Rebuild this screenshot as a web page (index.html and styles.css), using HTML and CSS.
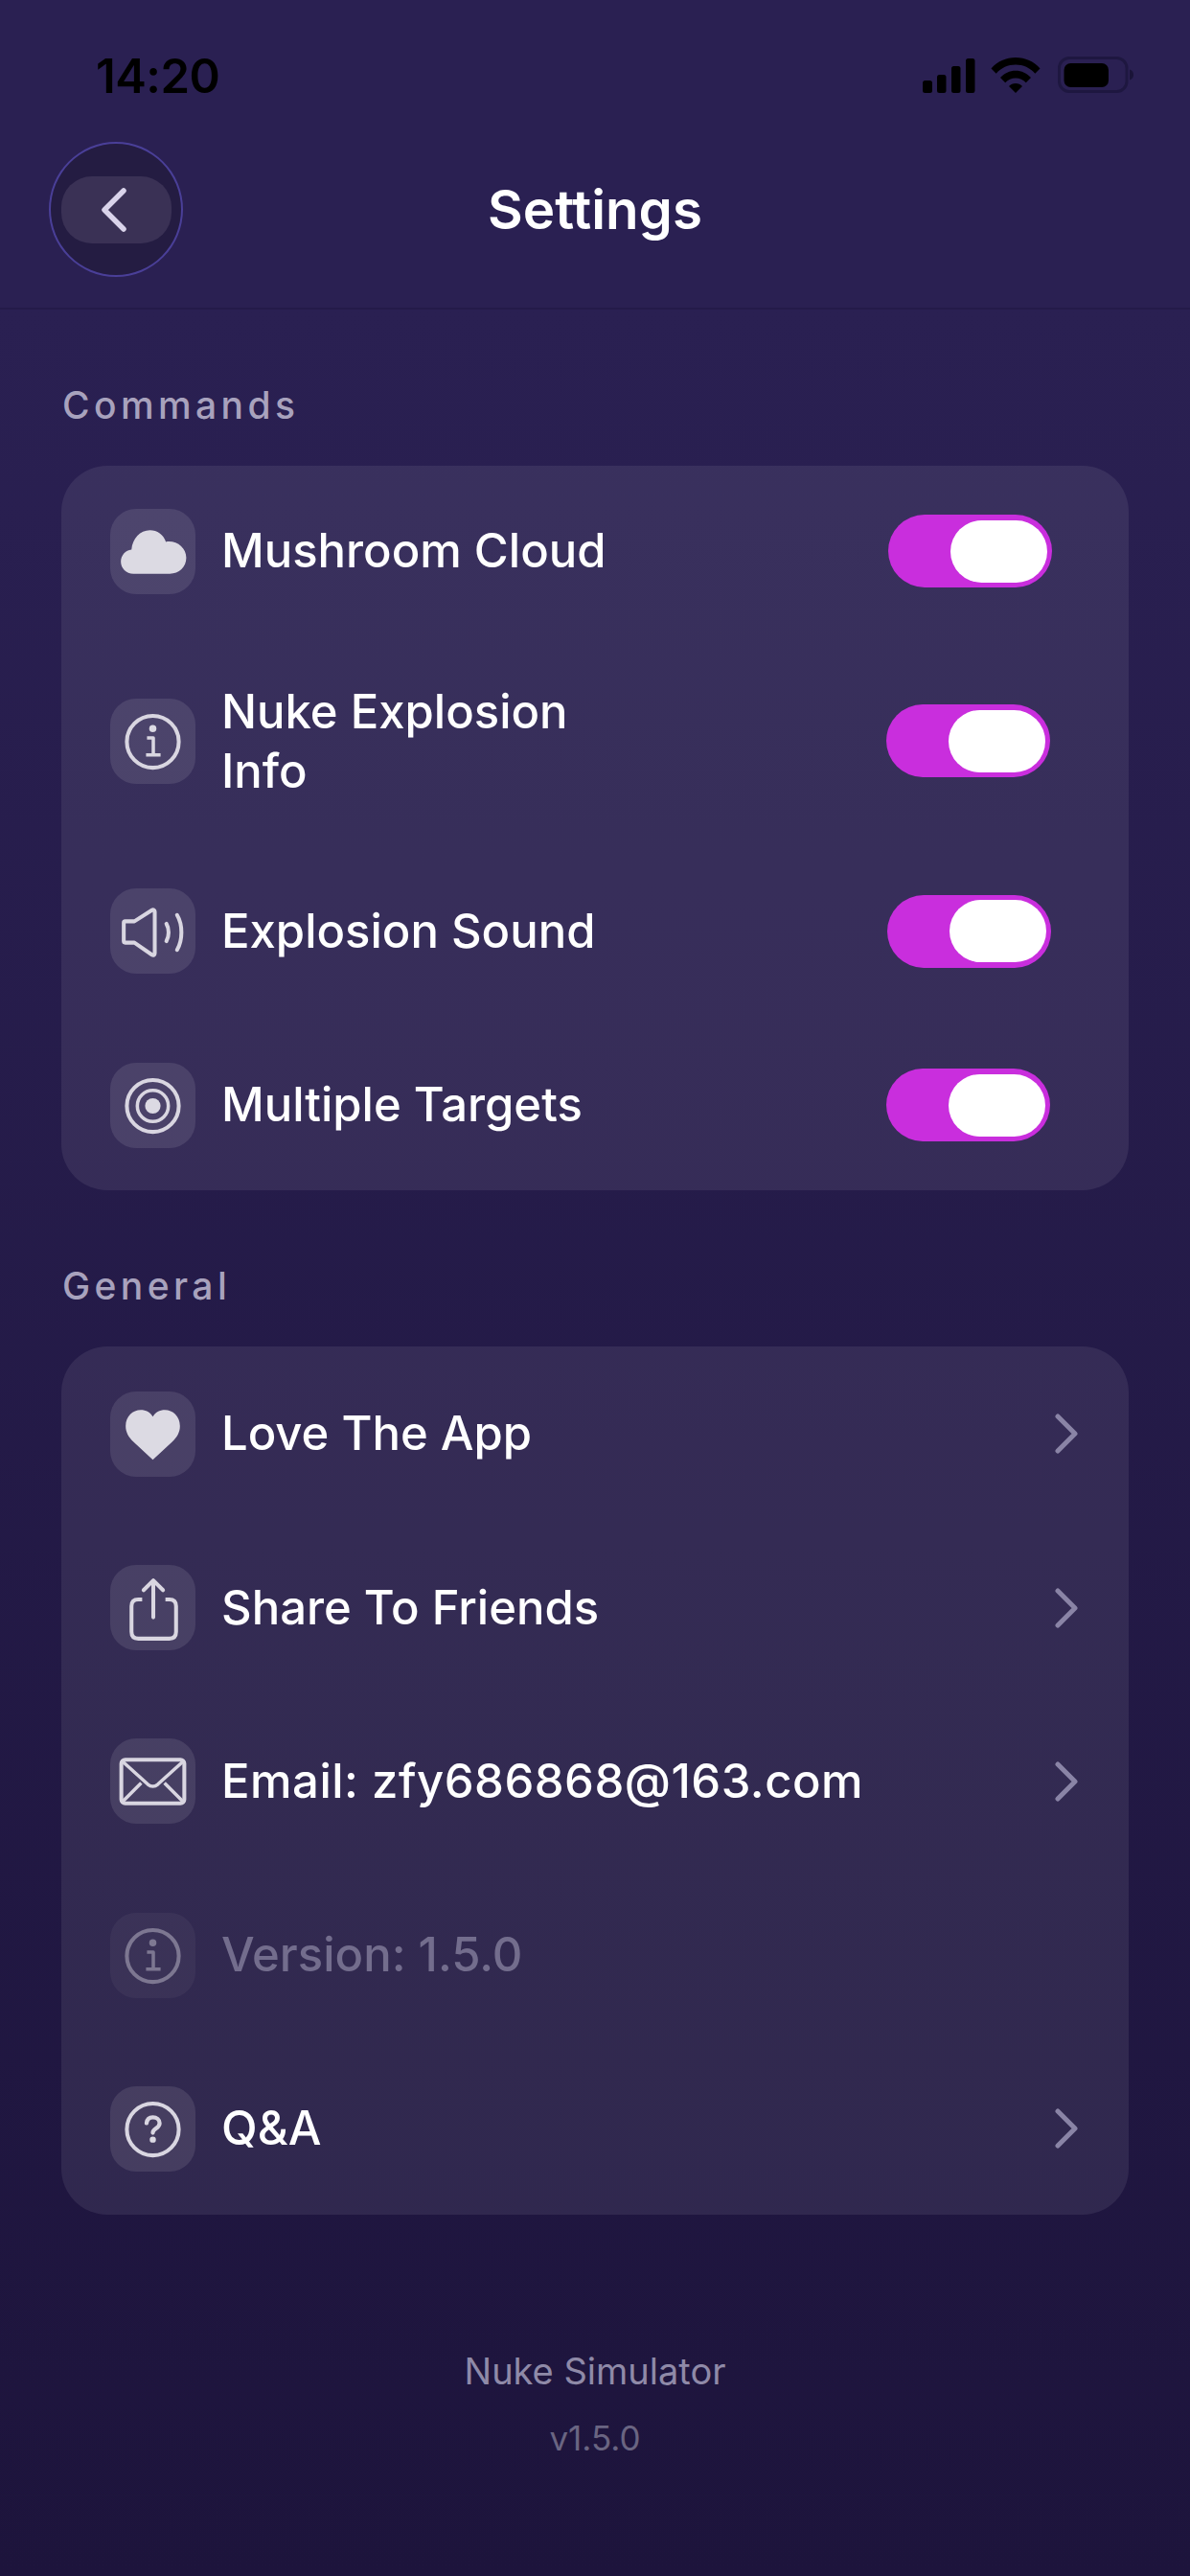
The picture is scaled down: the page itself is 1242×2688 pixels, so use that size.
FILE: index.html
```html
<!DOCTYPE html>
<html lang="en">
<head>
<meta charset="utf-8">
<title>Settings</title>
<link rel="stylesheet" href="styles.css">
</head>
<body>
<div class="page">
  <div class="statusbar">
    <span class="time">14:20</span>
    <div class="status-icons">
      <svg class="sig" width="56" height="37" viewBox="0 0 56 37"><rect x="0" y="23" width="10" height="13" rx="2.5"/><rect x="15" y="17" width="9.5" height="19" rx="2.5"/><rect x="30" y="8" width="9.5" height="28" rx="2.5"/><rect x="45" y="0" width="9.5" height="36" rx="2.5"/></svg>
      <svg class="wifi" width="52" height="38" viewBox="0 0 52 38"><path d="M0.5 12.5C7 5 16 1 26 1s19 4 25.5 11.5l-5.2 5.3C41 11.8 34 8.6 26 8.6S11 11.8 5.700 17.800Z"/><path d="M10 22c4-4.600 10-7.300 16-7.300s12 2.700 16 7.300l-5.200 5.300C34 24.200 30.200 22.500 26 22.500s-8 1.700-10.800 4.800Z"/><path d="M19 31c1.700-1.900 4.300-3 7-3s5.300 1.100 7 3l-7 7Z"/></svg>
      <svg class="batt" width="80" height="38" viewBox="0 0 80 38"><rect class="batt-shell" x="1.500" y="1.500" width="70.500" height="35" rx="10.500"/><rect class="batt-fill" x="6.500" y="7" width="46.500" height="25" rx="7"/><path class="batt-nub" d="M75 13.500c2.500.8 4 2.800 4 5.500s-1.500 4.700-4 5.500Z"/></svg>
    </div>
  </div>

  <header class="navbar">
    <button class="back" type="button" aria-label="Back">
      <span class="back-pill">
        <svg width="30" height="48" viewBox="0 0 30 48"><path d="M23 4 3 24l20 20"/></svg>
      </span>
    </button>
    <h1 class="title">Settings</h1>
  </header>

  <main class="content">
    <h2 class="section-label">Commands</h2>
    <section class="card">
      <div class="row row-first">
        <span class="icon"><svg viewBox="0 0 88 88"><path class="solid" d="M24 67c-7.500 0-13-5.700-13-12.500 0-6.500 4.800-11.800 11-12.500C23 30.500 31 22 41 22c7.500 0 14 4.500 16.500 12 1-.2 2-.3 3-.3 10 0 18 7.300 18 16.800C78.500 60 71 67 61.500 67Z"/></svg></span>
        <span class="label">Mushroom Cloud</span>
        <span class="toggle toggle-r1"><span class="thumb"></span></span>
      </div>
      <div class="row row-tall">
        <span class="icon"><svg viewBox="0 0 88 88"><circle class="line" cx="44" cy="44.500" r="26.800"/><circle class="solid" cx="44" cy="31" r="3.700"/><path class="line thin" d="M38 40.500h6.500v17.500M37 58h15"/></svg></span>
        <span class="label label-wrap">Nuke Explosion Info</span>
        <span class="toggle toggle-r2"><span class="thumb"></span></span>
      </div>
      <div class="row row-sound">
        <span class="icon"><svg viewBox="0 0 88 88"><path class="line" d="M15.500 34h9.500L43 22.500c1.500-1 3-.3 3 1.500v43c0 1.800-1.500 2.500-3 1.500L25 56h-9.500c-1 0-1.500-.6-1.500-1.500V35.500c0-1 .5-1.500 1.500-1.500Z"/><path class="line round" d="M58 36.500c3 5 3 13 0 18M69 27.500c6 10 6 26 0 36"/></svg></span>
        <span class="label">Explosion Sound</span>
        <span class="toggle toggle-r3"><span class="thumb"></span></span>
      </div>
      <div class="row row-last">
        <span class="icon"><svg viewBox="0 0 88 88"><circle class="line" cx="44" cy="44.500" r="26.800"/><circle class="line thin" cx="44" cy="44.500" r="16"/><circle class="solid" cx="44" cy="44.500" r="8"/></svg></span>
        <span class="label">Multiple Targets</span>
        <span class="toggle toggle-r2"><span class="thumb"></span></span>
      </div>
    </section>

    <h2 class="section-label section-general">General</h2>
    <section class="card">
      <div class="row row-g1">
        <span class="icon"><svg viewBox="0 0 88 88"><path class="solid" d="M44 70.500 24 52C19 47 16 42 16 35.500 16 25.500 23.500 19 31.500 19c5.500 0 10 2.500 12.500 7 2.500-4.500 7-7 12.500-7C64.500 19 72 25.500 72 35.500 72 42 69 47 64 52Z"/></svg></span>
        <span class="label">Love The App</span>
        <svg class="chev" viewBox="0 0 24 42"><path d="M3 3l18 18L3 39"/></svg>
      </div>
      <div class="row">
        <span class="icon"><svg viewBox="0 0 88 88"><path class="line" d="M33 35.500h-4c-4.500 0-7 2.500-7 7V69c0 4.500 2.500 7 7 7h32c4.500 0 7-2.500 7-7V42.500c0-4.500-2.500-7-7-7h-4"/><path class="line round" d="M44.500 54V17M34.500 26l10-10 10 10"/></svg></span>
        <span class="label">Share To Friends</span>
        <svg class="chev" viewBox="0 0 24 42"><path d="M3 3l18 18L3 39"/></svg>
      </div>
      <div class="row">
        <span class="icon"><svg viewBox="0 0 88 88"><rect class="line" x="11.500" y="22" width="65" height="45" rx="4"/><path class="line thin" d="M13 24l26 23.500c3 2.500 7 2.500 10 0L75 24M13 65l19-19M75 65 56 46"/></svg></span>
        <span class="label label-email">Email: zfy686868@163.com</span>
        <svg class="chev" viewBox="0 0 24 42"><path d="M3 3l18 18L3 39"/></svg>
      </div>
      <div class="row row-version is-disabled">
        <span class="icon"><svg viewBox="0 0 88 88"><circle class="line" cx="44" cy="44.500" r="26.800"/><circle class="solid" cx="44" cy="31" r="3.700"/><path class="line thin" d="M38 40.500h6.500v17.500M37 58h15"/></svg></span>
        <span class="label">Version: 1.5.0</span>
      </div>
      <div class="row row-g-last">
        <span class="icon"><svg viewBox="0 0 88 88"><circle class="line" cx="44" cy="44.500" r="26.800"/><path class="line question round" d="M37.500 38c.5-3.800 3-6 6.500-6 4 0 7 2.500 7 6 0 5.500-7 5.500-7 10"/><circle class="solid" cx="44" cy="55" r="3.200"/></svg></span>
        <span class="label">Q&amp;A</span>
        <svg class="chev" viewBox="0 0 24 42"><path d="M3 3l18 18L3 39"/></svg>
      </div>
    </section>

    <footer class="footer">
      <p class="app-name">Nuke Simulator</p>
      <p class="app-version">v1.5.0</p>
    </footer>
  </main>
</div>
</body>
</html>
```

FILE: styles.css
```css
* { box-sizing: border-box; }
html, body { margin: 0; padding: 0; }
body {
  width: 1242px;
  height: 2688px;
  overflow: hidden;
  font-family: Inter, "Noto Sans", "Liberation Sans", sans-serif;
}
.page {
  width: 1242px;
  height: 2688px;
  background: linear-gradient(180deg, #2a2052 0%, #2a2052 12%, #1d143c 100%);
  color: #fff;
}

/* status bar */
.statusbar {
  height: 130px;
  padding: 59px 58px 0 100px;
  display: flex;
  justify-content: space-between;
  align-items: flex-start;
}
.time {
  margin-top: 2px;
  font-size: 49px;
  line-height: 38px;
  font-weight: 600;
  color: #000;
  letter-spacing: -0.5px;
}
.status-icons { display: flex; align-items: flex-start; }
.sig { fill: #000; margin-top: 2px; margin-right: 15px; }
.wifi { fill: #000; margin-right: 18px; }
.batt-shell { fill: none; stroke: #1e1740; stroke-width: 3; }
.batt-fill { fill: #000; }
.batt-nub { fill: #1a1438; }

/* nav bar */
.navbar {
  height: 193px;
  position: relative;
  border-bottom: 2px solid #241b49;
  display: flex;
  align-items: flex-start;
  justify-content: center;
}
.back {
  position: absolute;
  left: 51px;
  top: 18px;
  width: 140px;
  height: 141px;
  padding: 0;
  border: 2.5px solid #4a3f98;
  border-radius: 50%;
  background: #241c42;
  display: flex;
  align-items: center;
  justify-content: center;
}
.back-pill {
  width: 115px;
  height: 70px;
  border-radius: 32px;
  background: #3a3155;
  display: flex;
  align-items: center;
  justify-content: center;
}
.back-pill svg { fill: none; stroke: #d9d3ea; stroke-width: 5.500; stroke-linecap: round; stroke-linejoin: round; }
.title {
  margin: 56px 0 0;
  font-size: 56.5px;
  line-height: 66px;
  font-weight: 600;
  color: #fff;
}

/* content */
.content { padding: 0 64px; }
.section-label {
  margin: 0;
  padding: 78px 0 0 1px;
  font-size: 39px;
  line-height: 44px;
  font-weight: 500;
  letter-spacing: 4.4px;
  color: #a8a2bd;
}
.card {
  margin-top: 41px;
  border-radius: 48px;
  background: rgba(255, 255, 255, 0.08);
}
.row {
  display: flex;
  align-items: center;
  height: 181px;
  padding: 0 0 0 51px;
}
.row-first { height: 178px; }
.row-tall { height: 218px; }
.row-sound { height: 179px; }
.row-last { padding-top: 3px; }
.row-g1 { height: 182px; }
.row-version { height: 182px; }
.row-g-last { height: 180px; }

.icon {
  width: 89px;
  height: 89px;
  flex: none;
  border-radius: 27px;
  background: rgba(255, 255, 255, 0.1);
  display: block;
}
.icon svg { display: block; width: 89px; height: 89px; }
.solid { fill: #dcdae3; }
.line { fill: none; stroke: #d9d6e1; stroke-width: 4; stroke-linejoin: round; }
.thin { stroke-width: 3.500; }
.question { stroke-width: 4.200; }
.round { stroke-linecap: round; }

.label {
  margin-left: 27px;
  font-size: 49px;
  line-height: 62px;
  font-weight: 500;
  color: #fff;
}
.label-wrap { width: 400px; margin-top: 2px; }
.label-email { letter-spacing: 0.5px; }

.toggle {
  margin-left: auto;
  width: 171px;
  height: 76px;
  flex: none;
  border-radius: 38px;
  background: #c92edd;
  display: flex;
  align-items: center;
  justify-content: flex-end;
  padding-right: 5px;
}
.toggle-r1 { margin-right: 80px; }
.toggle-r2 { margin-right: 82px; }
.toggle-r3 { margin-right: 81px; }
.thumb {
  width: 101px;
  height: 65px;
  border-radius: 33px;
  background: #fff;
}

.chev {
  margin-left: auto;
  margin-right: 53px;
  width: 24px;
  height: 42px;
  flex: none;
  fill: none;
  stroke: #8a84a6;
  stroke-width: 5;
  stroke-linecap: round;
  stroke-linejoin: round;
}

.is-disabled .label { color: #736d8d; }
.is-disabled .icon { opacity: 0.45; }

/* footer */
.footer { padding-top: 141px; text-align: center; }
.app-name {
  margin: 0;
  font-size: 38px;
  line-height: 44px;
  color: #8f8aa8;
}
.app-version {
  margin: 26px 0 0;
  font-size: 35px;
  line-height: 44px;
  color: #6a6582;
}
```
